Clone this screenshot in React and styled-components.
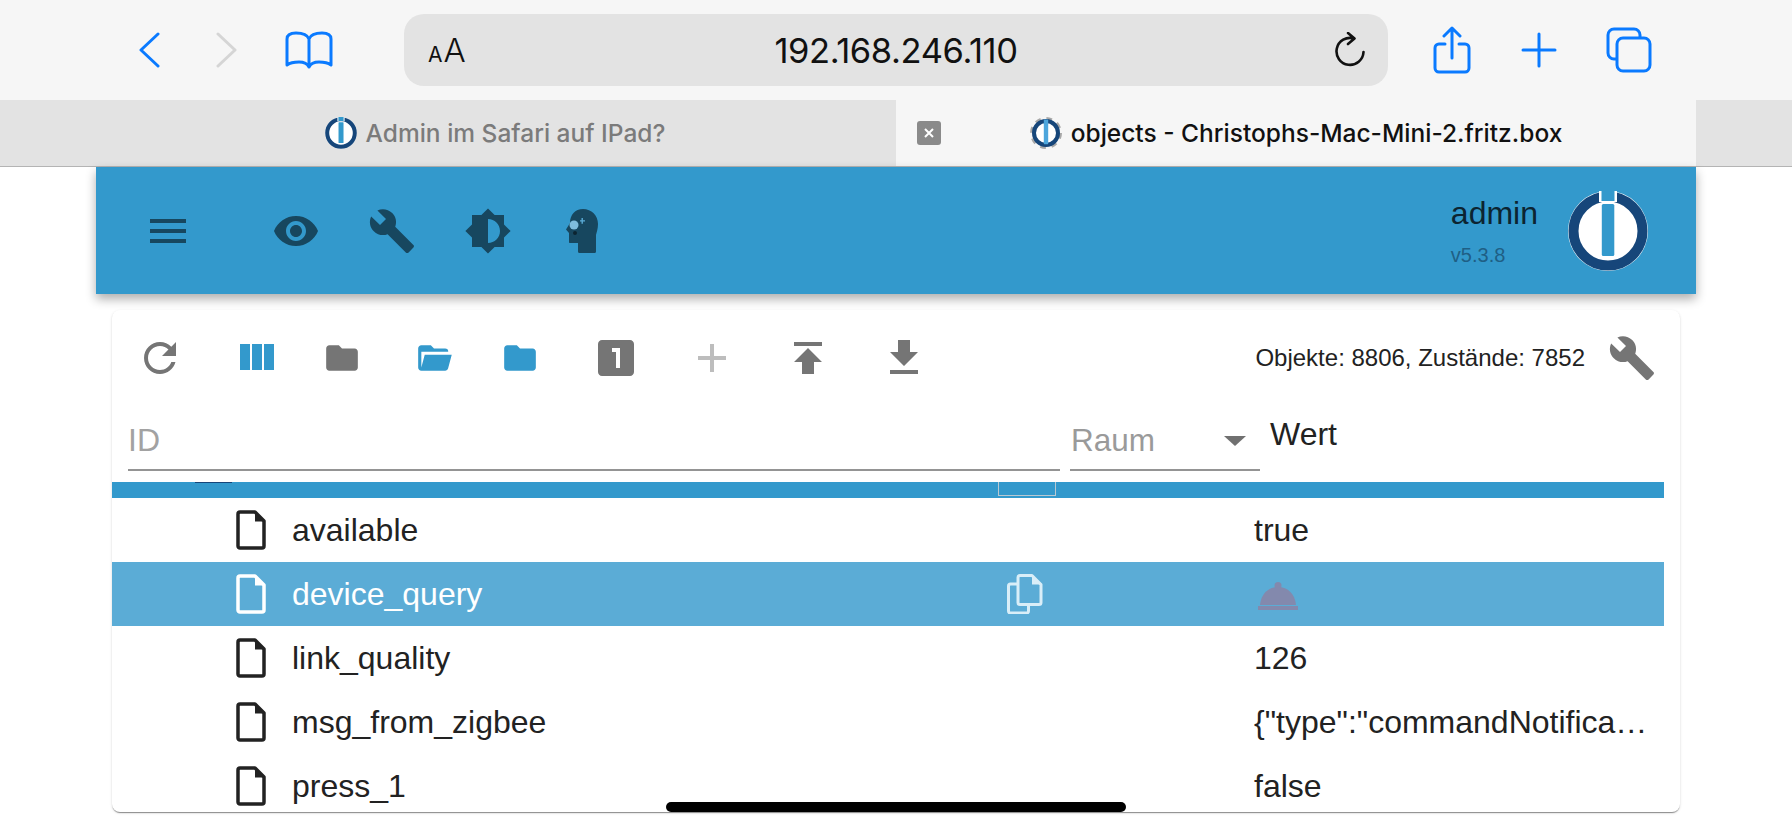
import React from 'react';
import styled, { createGlobalStyle } from 'styled-components';

const GlobalStyle = createGlobalStyle`
	html, body {
		margin: 0;
		padding: 0;
		height: 100%;
		overflow: hidden;
		background: #fff;
		font-family: "Liberation Sans", Arial, sans-serif;
	}
	* {
		box-sizing: border-box;
	}
`;

const theme = {
	blue: '#3399cc',
	navy: '#17475f',
	safari: '#0a7aff',
	gray: '#757575',
};

const Screen = styled.div`
	position: relative;
	width: 1792px;
	height: 828px;
	overflow: hidden;
	display: flex;
	flex-direction: column;
`;

const SafariBar = styled.div`
	height: 100px;
	flex: none;
	background: #f6f6f6;
	display: flex;
	align-items: center;
`;

const BarButton = styled.button`
	border: 0;
	padding: 0;
	background: none;
	width: ${(p) => p.$w}px;
	margin-left: ${(p) => p.$ml || 0}px;
	display: flex;
	justify-content: center;
	align-items: center;
	flex: none;
	svg {
		display: block;
		fill: none;
		stroke: ${(p) => p.$color || theme.safari};
		stroke-width: 3;
		stroke-linecap: round;
		stroke-linejoin: round;
	}
`;

const AddressBar = styled.div`
	position: relative;
	flex: none;
	width: 984px;
	height: 72px;
	margin-left: 71px;
	margin-right: 45px;
	border-radius: 20px;
	background: #e3e3e3;
	display: flex;
	align-items: center;
	justify-content: space-between;
	padding: 0 22px 0 24px;
`;

const TextSize = styled.div`
	display: flex;
	align-items: baseline;
	color: #111;
	font-family: Inter, sans-serif;
	font-weight: 300;
	line-height: 1;
	span:first-child {
		font-size: 21px;
		font-weight: 400;
		margin-right: 1px;
	}
	span:last-child {
		font-size: 33px;
	}
`;

const Url = styled.div`
	position: absolute;
	left: 0;
	right: 0;
	top: 0;
	bottom: 0;
	display: flex;
	align-items: center;
	justify-content: center;
	font-family: Inter, sans-serif;
	font-size: 34.5px;
	letter-spacing: -0.4px;
	color: #111;
`;

const TabStrip = styled.div`
	height: 66px;
	flex: none;
	display: grid;
	grid-template-columns: 896px 800px 96px;
	background: #e3e3e3;
`;

const Tab = styled.div`
	position: relative;
	display: flex;
	align-items: center;
	justify-content: center;
	gap: 9px;
	background: ${(p) => (p.$active ? '#f6f6f6' : '#e3e3e3')};
	color: ${(p) => (p.$active ? '#111' : '#7b7b7b')};
	font-family: Inter, sans-serif;
	font-size: 24.5px;
	font-weight: 500;
	padding-left: ${(p) => (p.$active ? '0' : '94px')};
`;

const TabClose = styled.div`
	position: absolute;
	left: 21px;
	top: 21px;
	width: 24px;
	height: 24px;
	border-radius: 3px;
	background: #8a8a8a;
	display: flex;
	align-items: center;
	justify-content: center;
	svg {
		display: block;
	}
`;

const Page = styled.div`
	flex: 1;
	min-height: 0;
	border-top: 1px solid #b4b4b4;
	padding: 0 96px;
	display: flex;
	flex-direction: column;
`;

const Header = styled.header`
	position: relative;
	z-index: 2;
	flex: none;
	height: 127px;
	background: ${theme.blue};
	box-shadow: 0 5px 10px rgba(0, 0, 0, 0.32);
	display: flex;
	align-items: center;
	padding-left: 24px;
	padding-right: 48px;
`;

const NavButton = styled.div`
	width: ${(p) => p.$w || 96}px;
	flex: none;
	display: flex;
	justify-content: center;
	margin-right: ${(p) => p.$mr || 0}px;
	svg {
		display: block;
		fill: ${theme.navy};
	}
`;

const UserBox = styled.div`
	margin-left: auto;
	display: flex;
	align-items: center;
	gap: 30px;
`;

const UserText = styled.div`
	display: flex;
	flex-direction: column;
	gap: 13px;
`;

const UserName = styled.div`
	font-size: 32px;
	line-height: 36px;
	color: #0c2431;
`;

const Version = styled.div`
	font-size: 20px;
	line-height: 23px;
	color: #1f5f85;
`;

const Card = styled.section`
	position: relative;
	z-index: 3;
	margin: 16px 16px 0;
	height: 502px;
	flex: none;
	border-radius: 8px;
	overflow: hidden;
	background: #fff;
	box-shadow: 0 2px 1px -1px rgba(0, 0, 0, 0.3), 0 1px 1px rgba(0, 0, 0, 0.14), 0 1px 3px rgba(0, 0, 0, 0.12);
`;

const Toolbar = styled.div`
	height: 96px;
	display: flex;
	align-items: center;
`;

const ToolGrid = styled.div`
	display: grid;
	grid-template-columns: 96px 96px 76px 108px 80px 96px 96px 96px 96px;
	align-items: center;
`;

const ToolButton = styled.div`
	display: flex;
	justify-content: center;
	padding-right: ${(p) => p.$pr || 0}px;
	svg {
		display: block;
		fill: ${(p) => p.$color || theme.gray};
	}
`;

const Counter = styled.div`
	margin-left: auto;
	display: flex;
	align-items: center;
	gap: 23px;
	padding-right: 24px;
	font-size: 24px;
	color: #222;
	svg {
		display: block;
		fill: ${theme.gray};
	}
`;

const FilterRow = styled.div`
	height: 76px;
	padding: 0 16px;
	display: grid;
	grid-template-columns: 932px 190px 1fr;
	column-gap: 10px;
`;

const IdInput = styled.input`
	display: block;
	width: 100%;
	height: 65px;
	border: 0;
	border-bottom: 2px solid #949494;
	outline: 0;
	padding: 6px 0 0;
	background: none;
	font-family: inherit;
	font-size: 32px;
	color: #222;
	&::placeholder {
		color: #a2a2a2;
		opacity: 1;
	}
`;

const SelectField = styled.div`
	height: 65px;
	border-bottom: 2px solid #949494;
	display: flex;
	align-items: center;
	justify-content: space-between;
	padding: 6px 14px 0 1px;
	font-size: 31.5px;
	color: #9a9a9a;
`;

const Caret = styled.span`
	width: 0;
	height: 0;
	border-left: 11px solid transparent;
	border-right: 11px solid transparent;
	border-top: 10px solid #707070;
`;

const ValueLabel = styled.div`
	height: 56px;
	display: flex;
	align-items: center;
	font-size: 32px;
	color: #222;
`;

const TreeHead = styled.div`
	position: relative;
	margin-right: 16px;
	height: 16px;
	background: ${theme.blue};
	&::before {
		content: '';
		position: absolute;
		left: 83px;
		top: 0;
		width: 37px;
		height: 1px;
		background: #16467a;
	}
	&::after {
		content: '';
		position: absolute;
		left: 886px;
		top: 0;
		width: 56px;
		height: 13px;
		border: 1px solid #b9c9d2;
		border-top: 0;
	}
`;

const Row = styled.div`
	margin-right: 16px;
	height: 64px;
	display: grid;
	grid-template-columns: 124px 56px 715px 247px 1fr;
	align-items: center;
	font-size: 32px;
	background: ${(p) => (p.$selected ? '#5bacd6' : 'transparent')};
	color: ${(p) => (p.$selected ? '#fff' : '#222')};
	svg {
		display: block;
	}
`;

const RowCell = styled.div`
	grid-column: ${(p) => p.$col};
	min-width: 0;
`;

const RowValue = styled(RowCell)`
	white-space: nowrap;
`;

const BellCell = styled(RowCell)`
	padding: 4px 0 0 4px;
`;

const HomeIndicator = styled.div`
	position: absolute;
	left: 666px;
	top: 802px;
	width: 460px;
	height: 10px;
	border-radius: 5px;
	background: #000;
	z-index: 5;
`;

const LogoMark = ({ size }) => (
	<svg width={size} height={size} viewBox="0 0 80 80" style={{ display: 'block' }}>
		<circle cx="40" cy="40" r="40" fill="#fff" />
		<circle cx="40" cy="40" r="34.500" fill="none" stroke="#16467a" strokeWidth="10" />
		<rect x="31" y="0" width="18" height="11" fill="#fff" />
		<rect x="33.500" y="0" width="13" height="10" fill={theme.blue} />
		<rect x="33.800" y="13" width="12.500" height="52" rx="1.500" fill={theme.blue} />
	</svg>
);

const GearMark = ({ size }) => (
	<svg width={size} height={size} viewBox="0 0 80 80" style={{ display: 'block' }}>
		<circle cx="40" cy="40" r="36" fill="none" stroke="#a8a8a8" strokeWidth="8" strokeDasharray="14 14.270" />
		<circle cx="40" cy="40" r="30" fill="#fff" stroke="#16467a" strokeWidth="10" />
		<rect x="34.500" y="6" width="11" height="62" rx="1.500" fill="#4da6dc" />
	</svg>
);

const MenuIcon = () => (
	<svg width="36" height="24" viewBox="0 0 36 24">
		<rect y="0" width="36" height="4" />
		<rect y="10" width="36" height="4" />
		<rect y="20" width="36" height="4" />
	</svg>
);

const MuiIcon = ({ d, size = 48 }) => (
	<svg width={size} height={size} viewBox="0 0 24 24">
		<path d={d} />
	</svg>
);

const HeadIcon = () => (
	<svg width="32" height="44" viewBox="0 0 32 44">
		<path d="M17 0c8.500 0 15 6.500 15 15 0 5-1.500 8.500-2 11v16.500a1.500 1.500 0 0 1-1.500 1.500h-15a1.500 1.500 0 0 1-1.500-1.500V34H4c-.6 0-1-.4-1-1v-9l-3-3.500L4 14C4 6 9 0 17 0z" />
		<circle cx="8" cy="16" r="4.500" fill="#7fbcdc" />
		<path d="M14 11.200h1.500V9h1.400v2.200h2.100v1.400h-2.100v2.200h-1.400v-2.200H14z" fill="#5bacd6" />
		<circle cx="9" cy="24" r="2" fill="#0c2431" />
	</svg>
);

const FileIcon = ({ color }) => (
	<svg width="30" height="40" viewBox="0 0 30 40">
		<path d="M5 2h14l9 9v25a2 2 0 0 1-2 2H4a2 2 0 0 1-2-2V4a2 2 0 0 1 2-2z" fill="none" stroke={color} strokeWidth="3.500" strokeLinejoin="round" />
		<path d="M19 3v8.500h9z" fill={color} />
	</svg>
);

const CopyIcon = () => (
	<svg width="36" height="40" viewBox="0 0 36 40">
		<path d="M13 1.500h12l9 9v18a2 2 0 0 1-2 2H13a2 2 0 0 1-2-2v-25a2 2 0 0 1 2-2z" fill="none" stroke="#d9eef8" strokeWidth="3" strokeLinejoin="round" />
		<path d="M25 2v8.500h8.500z" fill="#d9eef8" />
		<path d="M11 10H3.500a2 2 0 0 0-2 2v25a2 2 0 0 0 2 2h16a2 2 0 0 0 2-2v-6.500" fill="none" stroke="#d9eef8" strokeWidth="3" strokeLinejoin="round" />
	</svg>
);

const BellIcon = () => (
	<svg width="40" height="28" viewBox="0 0 40 28">
		<circle cx="20" cy="3.500" r="3.500" fill="#8389ad" />
		<path d="M2 23C3 12 10 5 20 5s17 7 18 18z" fill="#8389ad" />
		<rect x="0" y="24" width="40" height="4" fill="#8389ad" />
	</svg>
);

const rows = [
	{ name: 'available', value: 'true' },
	{ name: 'device_query', selected: true },
	{ name: 'link_quality', value: '126' },
	{ name: 'msg_from_zigbee', value: '{"type":"commandNotifica…' },
	{ name: 'press_1', value: 'false' },
];

const paths = {
	eye: 'M12 4.500C7 4.500 2.730 7.610 1 12c1.730 4.390 6 7.500 11 7.500s9.270-3.110 11-7.500c-1.730-4.390-6-7.500-11-7.500zM12 17c-2.760 0-5-2.240-5-5s2.240-5 5-5 5 2.240 5 5-2.240 5-5 5zm0-8c-1.660 0-3 1.340-3 3s1.340 3 3 3 3-1.340 3-3-1.340-3-3-3z',
	wrench: 'M22.700 19l-9.100-9.100c.9-2.300.4-5-1.500-6.900-2-2-5-2.400-7.400-1.300L9 6 6 9 1.600 4.700C.4 7.100.9 10.100 2.900 12.100c1.900 1.900 4.600 2.400 6.900 1.500l9.100 9.100c.4.4 1 .4 1.400 0l2.300-2.300c.5-.4.5-1.100.1-1.400z',
	brightness: 'M20 15.310L23.310 12 20 8.690V4h-4.690L12 .69 8.690 4H4v4.690L.69 12 4 15.310V20h4.690L12 23.310 15.310 20H20v-4.690zM12 18V6c3.310 0 6 2.690 6 6s-2.690 6-6 6z',
	refresh: 'M17.650 6.350C16.200 4.900 14.210 4 12 4c-4.420 0-7.990 3.580-7.990 8s3.570 8 7.990 8c3.730 0 6.840-2.550 7.730-6h-2.080c-.82 2.330-3.040 4-5.650 4-3.310 0-6-2.690-6-6s2.690-6 6-6c1.660 0 3.140.69 4.220 1.780L13 11h7V4l-2.350 2.350z',
	columns: 'M10 18h5V5h-5v13zm-6 0h5V5H4v13zM16 5v13h5V5h-5z',
	folder: 'M10 4H4c-1.100 0-1.990.9-1.990 2L2 18c0 1.100.9 2 2 2h16c1.100 0 2-.9 2-2V8c0-1.100-.9-2-2-2h-8l-2-2z',
	folderOpen: 'M19 20H4c-1.110 0-2-.9-2-2V6c0-1.110.89-2 2-2h6l2 2h7a2 2 0 0 1 2 2H4v10l2.140-8h17.070l-2.280 8.500c-.23.87-1.010 1.500-1.930 1.500z',
	one: 'M19 3H5c-1.100 0-2 .9-2 2v14c0 1.100.9 2 2 2h14c1.100 0 2-.9 2-2V5c0-1.100-.9-2-2-2zm-5 14h-2V9h-2V7h4v10z',
	add: 'M19 13h-6v6h-2v-6H5v-2h6V5h2v6h6v2z',
	publish: 'M5 4v2h14V4H5zm0 10h4v6h6v-6h4l-7-7-7 7z',
	download: 'M19 9h-4V3H9v6H5l7 7 7-7zM5 18v2h14v-2H5z',
};

const App = () => (
	<Screen>
		<GlobalStyle />
		<SafariBar>
			<BarButton $w={22} $ml={138}>
				<svg width="22" height="36" viewBox="0 0 22 36"><path d="M20 2L3 18l17 16" /></svg>
			</BarButton>
			<BarButton $w={22} $ml={56} $color="#d5d5d5">
				<svg width="22" height="36" viewBox="0 0 22 36"><path d="M2 2l17 16L2 34" /></svg>
			</BarButton>
			<BarButton $w={48} $ml={47}>
				<svg width="48" height="38" viewBox="0 0 48 38">
					<path d="M24 8C22 3 17 2 11 2 6 2 2 3 2 8v26c4-3 8-3 12-3 5 0 8 1 10 5 2-4 5-5 10-5 4 0 8 0 12 3V8c0-5-4-6-9-6-6 0-11 1-13 6zM24 8v28" />
				</svg>
			</BarButton>
			<AddressBar>
				<TextSize><span>A</span><span>A</span></TextSize>
				<Url>192.168.246.110</Url>
				<BarButton $w={32} $color="#111">
					<svg width="32" height="36" viewBox="0 0 32 36">
						<path d="M20 6.500A13.500 13.500 0 1 0 29.500 20M14 1l6.500 5.500L14 12" strokeWidth="2.600" />
					</svg>
				</BarButton>
			</AddressBar>
			<BarButton $w={38}>
				<svg width="38" height="48" viewBox="0 0 38 48">
					<path d="M12 18H6a4 4 0 0 0-4 4v20a4 4 0 0 0 4 4h26a4 4 0 0 0 4-4V22a4 4 0 0 0-4-4h-6M19 32V3M11 10l8-8 8 8" />
				</svg>
			</BarButton>
			<BarButton $w={36} $ml={50}>
				<svg width="36" height="36" viewBox="0 0 36 36"><path d="M18 2v32M2 18h32" /></svg>
			</BarButton>
			<BarButton $w={46} $ml={49}>
				<svg width="46" height="46" viewBox="0 0 46 46">
					<path d="M10 32H8a6 6 0 0 1-6-6V8a6 6 0 0 1 6-6h20a6 6 0 0 1 6 6v2" />
					<rect x="11" y="11" width="33" height="33" rx="6" />
				</svg>
			</BarButton>
		</SafariBar>
		<TabStrip>
			<Tab>
				<LogoMark size={32} />
				<span>Admin im Safari auf IPad?</span>
			</Tab>
			<Tab $active>
				<TabClose>
					<svg width="12" height="12" viewBox="0 0 12 12"><path d="M2 2l8 8M10 2l-8 8" stroke="#fff" strokeWidth="2" /></svg>
				</TabClose>
				<GearMark size={32} />
				<span>objects - Christophs-Mac-Mini-2.fritz.box</span>
			</Tab>
			<Tab />
		</TabStrip>
		<Page>
			<Header>
				<NavButton $mr={32}><MenuIcon /></NavButton>
				<NavButton><MuiIcon d={paths.eye} /></NavButton>
				<NavButton><MuiIcon d={paths.wrench} /></NavButton>
				<NavButton><MuiIcon d={paths.brightness} /></NavButton>
				<NavButton $w={92}><HeadIcon /></NavButton>
				<UserBox>
					<UserText>
						<UserName>admin</UserName>
						<Version>v5.3.8</Version>
					</UserText>
					<LogoMark size={80} />
				</UserBox>
			</Header>
			<Card>
				<Toolbar>
					<ToolGrid>
						<ToolButton><MuiIcon d={paths.refresh} /></ToolButton>
						<ToolButton $color={theme.blue}><MuiIcon d={paths.columns} /></ToolButton>
						<ToolButton><MuiIcon d={paths.folder} size={38} /></ToolButton>
						<ToolButton $color={theme.blue}><MuiIcon d={paths.folderOpen} size={38} /></ToolButton>
						<ToolButton $color={theme.blue} $pr={16}><MuiIcon d={paths.folder} size={38} /></ToolButton>
						<ToolButton><MuiIcon d={paths.one} /></ToolButton>
						<ToolButton $color="#bdbdbd"><MuiIcon d={paths.add} /></ToolButton>
						<ToolButton><MuiIcon d={paths.publish} /></ToolButton>
						<ToolButton><MuiIcon d={paths.download} /></ToolButton>
					</ToolGrid>
					<Counter>
						<span>Objekte: 8806, Zustände: 7852</span>
						<MuiIcon d={paths.wrench} />
					</Counter>
				</Toolbar>
				<FilterRow>
					<IdInput placeholder="ID" readOnly />
					<SelectField>
						<span>Raum</span>
						<Caret />
					</SelectField>
					<ValueLabel>Wert</ValueLabel>
				</FilterRow>
				<TreeHead />
				{rows.map((row) => (
					<Row key={row.name} $selected={row.selected}>
						<RowCell $col={2}><FileIcon color={row.selected ? '#fff' : '#222'} /></RowCell>
						<RowCell $col={3}>{row.name}</RowCell>
						{row.selected && <RowCell $col={4}><CopyIcon /></RowCell>}
						{row.selected
							? <BellCell $col={5}><BellIcon /></BellCell>
							: <RowValue $col={5}>{row.value}</RowValue>}
					</Row>
				))}
			</Card>
		</Page>
		<HomeIndicator />
	</Screen>
);

export default App;
